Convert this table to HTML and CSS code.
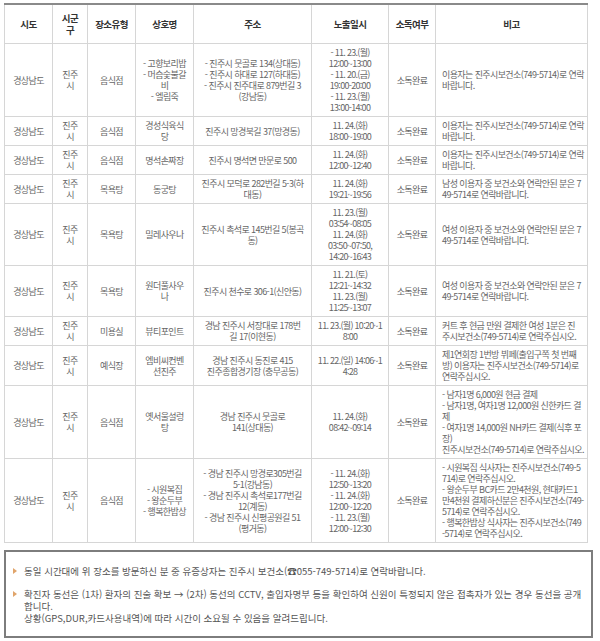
FILE: index.html
```html
<!DOCTYPE html>
<html lang="ko">
<head>
<meta charset="utf-8">
<title>확진자 동선</title>
<link rel="stylesheet" href="styles.css">
</head>
<body>
<div class="wrap">
<table class="list">
<colgroup>
<col class="c1"><col class="c2"><col class="c3"><col class="c4"><col class="c5"><col class="c6"><col class="c7"><col class="c8">
</colgroup>
<thead>
<tr><th>시도</th><th>시군<br>구</th><th>장소유형</th><th>상호명</th><th>주소</th><th>노출일시</th><th>소독여부</th><th>비고</th></tr>
</thead>
<tbody>
<tr>
<td>경상남도</td><td>진주<br>시</td><td>음식점</td>
<td>- 고향보리밥<br>- 머슴숯불갈<br>비<br>- 엘림죽</td>
<td>- 진주시 뭇골로 134(상대동)<br>- 진주시 하대로 127(하대동)<br>- 진주시 진주대로 879번길 3<br>(강남동)</td>
<td class="time">- 11. 23.(월)<br>12:00~13:00<br>- 11. 20.(금)<br>19:00-20:00<br>- 11. 23.(월)<br>13:00-14:00</td>
<td>소독완료</td>
<td class="note">이용자는 진주시보건소(749-5714)로 연락<br>바랍니다.</td>
</tr>
<tr>
<td>경상남도</td><td>진주<br>시</td><td>음식점</td>
<td>경성식육식<br>당</td>
<td>진주시 망경북길 37(망경동)</td>
<td class="time">11. 24.(화)<br>18:00~19:00</td>
<td>소독완료</td>
<td class="note">이용자는 진주시보건소(749-5714)로 연락<br>바랍니다.</td>
</tr>
<tr>
<td>경상남도</td><td>진주<br>시</td><td>음식점</td>
<td>명석손짜장</td>
<td>진주시 명석면 만문로 500</td>
<td class="time">11. 24.(화)<br>12:00~12:40</td>
<td>소독완료</td>
<td class="note">이용자는 진주시보건소(749-5714)로 연락<br>바랍니다.</td>
</tr>
<tr>
<td>경상남도</td><td>진주<br>시</td><td>목욕탕</td>
<td>동궁탕</td>
<td>진주시 모덕로 282번길 5-3(하<br>대동)</td>
<td class="time">11. 24.(화)<br>19:21~19:56</td>
<td>소독완료</td>
<td class="note">남성 이용자 중 보건소와 연락안된 분은 7<br>49-5714로 연락바랍니다.</td>
</tr>
<tr>
<td>경상남도</td><td>진주<br>시</td><td>목욕탕</td>
<td>밀레사우나</td>
<td>진주시 촉석로 145번길 5(봉곡<br>동)</td>
<td class="time">11. 23.(월)<br>03:54~08:05<br>11. 24.(화)<br>03:50~07:50,<br>14:20~16:43</td>
<td>소독완료</td>
<td class="note">여성 이용자 중 보건소와 연락안된 분은 7<br>49-5714로 연락바랍니다.</td>
</tr>
<tr>
<td>경상남도</td><td>진주<br>시</td><td>목욕탕</td>
<td>원더풀사우<br>나</td>
<td>진주시 천수로 306-1(신안동)</td>
<td class="time">11. 21.(토)<br>12:21~14:32<br>11. 23.(월)<br>11:25~13:07</td>
<td>소독완료</td>
<td class="note">여성 이용자 중 보건소와 연락안된 분은 7<br>49-5714로 연락바랍니다.</td>
</tr>
<tr>
<td>경상남도</td><td>진주<br>시</td><td>미용실</td>
<td>뷰티포인트</td>
<td>경남 진주시 서장대로 178번<br>길 17(이현동)</td>
<td class="time">11. 23.(월) 10:20~1<br>8:00</td>
<td>소독완료</td>
<td class="note">커트 후 현금 만원 결제한 여성 1분은 진<br>주시보건소(749-5714)로 연락주십시오.</td>
</tr>
<tr>
<td>경상남도</td><td>진주<br>시</td><td>예식장</td>
<td>엠비씨컨벤<br>션진주</td>
<td>경남 진주시 동진로 415<br>진주종합경기장 (충무공동)</td>
<td class="time">11. 22.(일) 14:06~1<br>4:28</td>
<td>소독완료</td>
<td class="note">제1연회장 1번방 뷔페(출입구쪽 첫 번째<br>방) 이용자는 진주시보건소(749-5714)로<br>연락주십시오.</td>
</tr>
<tr>
<td>경상남도</td><td>진주<br>시</td><td>음식점</td>
<td>옛서울설렁<br>탕</td>
<td>경남 진주시 뭇골로<br>141(상대동)</td>
<td class="time">11. 24.(화)<br>08:42~09:14</td>
<td>소독완료</td>
<td class="note">- 남자1명 6,000원 현금 결제<br>- 남자1명, 여자1명 12,000원 신한카드 결<br>제<br>- 여자1명 14,000원 NH카드 결제(식후 포<br>장)<br>진주시보건소(749-5714)로 연락주십시오.</td>
</tr>
<tr>
<td>경상남도</td><td>진주<br>시</td><td>음식점</td>
<td>- 시원복집<br>- 왕순두부<br>- 행복한밥상</td>
<td>- 경남 진주시 망경로305번길<br>5-1(강남동)<br>- 경남 진주시 촉석로177번길<br>12(계동)<br>- 경남 진주시 신평공원길 51<br>(평거동)</td>
<td class="time">- 11. 24.(화)<br>12:50~13:20<br>- 11. 24.(화)<br>12:00~12:20<br>- 11. 23.(월)<br>12:00~12:30</td>
<td>소독완료</td>
<td class="note">- 시원복집 식사자는 진주시보건소(749-5<br>714)로 연락주십시오.<br>- 왕순두부 BC카드 2만4천원, 현대카드1<br>만4천원 결제하신분은 진주시보건소(749-<br>5714)로 연락주십시오.<br>- 행복한밥상 식사자는 진주시보건소(749<br>-5714)로 연락주십시오.</td>
</tr>
</tbody>
</table>

<div class="notice">
<p class="item"><span class="bullet"></span>동일 시간대에 위 장소를 방문하신 분 중 유증상자는 진주시 보건소(☎055-749-5714)로 연락바랍니다.</p>
<p class="item"><span class="bullet"></span>확진자 동선은 (1차) 환자의 진술 확보 → (2차) 동선의 CCTV, 출입자명부 등을 확인하여 신원이 특정되지 않은 접촉자가 있는 경우 동선을 공개<br>합니다.<br>상황(GPS,DUR,카드사용내역)에 따라 시간이 소요될 수 있음을 알려드립니다.</p>
</div>
</div>
</body>
</html>
```

FILE: styles.css
```css
html, body {
  margin: 0;
  padding: 0;
  background: #fff;
}

body {
  font-family: "Noto Sans CJK KR", "Noto Sans", sans-serif;
  color: #666;
}

.wrap {
  padding: 3px 0 0 4px;
  width: 590px;
}

.list {
  width: 583px;
  border-collapse: collapse;
  table-layout: fixed;
  border-top: 2px solid #8a8a8a;
}

.c1 { width: 48px; }
.c2 { width: 35px; }
.c3 { width: 48px; }
.c4 { width: 58px; }
.c5 { width: 118px; }
.c6 { width: 77px; }
.c7 { width: 47px; }
.c8 { width: 152px; }

.list th,
.list td {
  border: 1px solid #d6d6d6;
  text-align: center;
  vertical-align: middle;
  font-size: 9px;
  line-height: 11px;
  letter-spacing: -0.6px;
  color: #666;
  padding: 3px 1px;
  font-weight: normal;
  white-space: nowrap;
}

.list th {
  color: #333;
  font-weight: bold;
  font-size: 9.5px;
  line-height: 12px;
  padding: 7px 1px;
}

.list td.time {
  letter-spacing: -0.7px;
}

.list td.note {
  text-align: left;
  padding-left: 6px;
  padding-right: 2px;
}

.notice {
  box-sizing: border-box;
  width: 589px;
  margin-top: 7px;
  border: 2px solid #7d7d7d;
  padding: 13px 8px 12px 4px;
}

.item {
  margin: 0;
  position: relative;
  padding-left: 14px;
  font-size: 9.5px;
  line-height: 12px;
  color: #555;
  letter-spacing: 0;
}

.item + .item {
  margin-top: 11px;
}

.bullet {
  position: absolute;
  left: 3px;
  top: 3px;
  width: 0;
  height: 0;
  border-top: 3px solid transparent;
  border-bottom: 3px solid transparent;
  border-left: 4px solid #e0a46a;
}
```
